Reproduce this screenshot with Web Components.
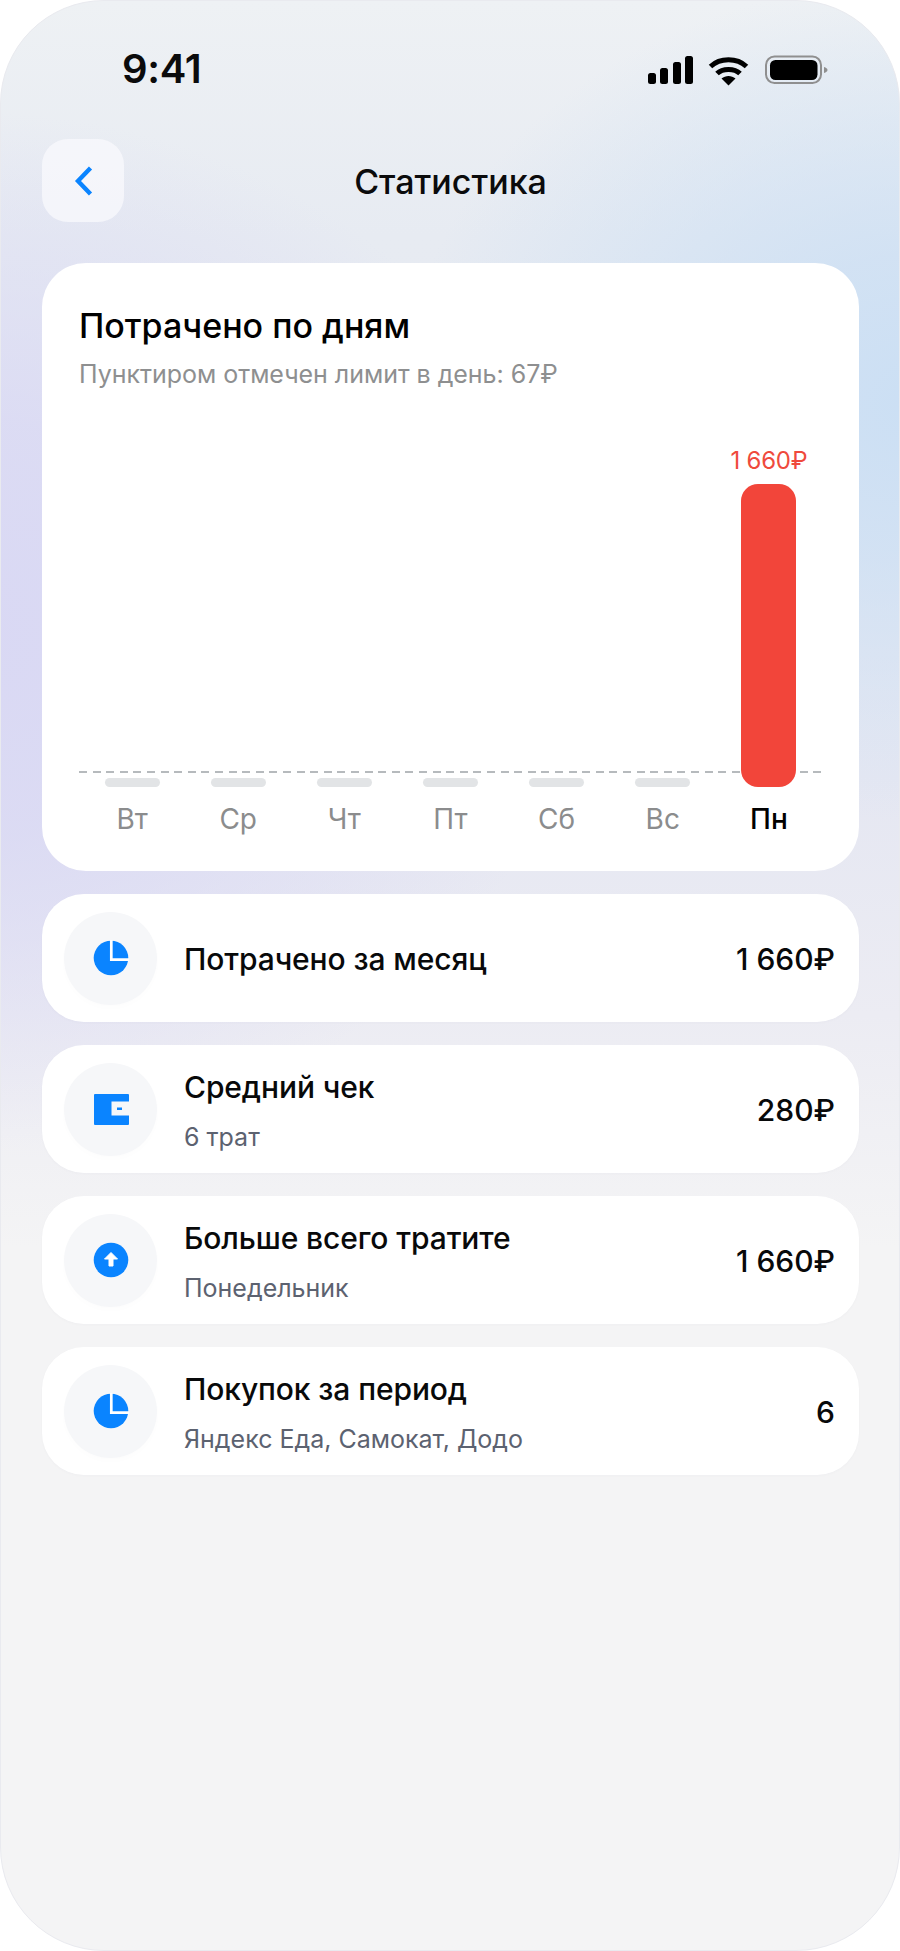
<!DOCTYPE html>
<html lang="ru">
<head>
<meta charset="utf-8">
<title>Статистика</title>
<style>
    html, body{
        margin: 0;
        background: #fff;
    }
    body{
        font-family: "Inter", "Noto Sans", sans-serif;
    }
</style>
</head>
<body>
<phone-frame>
    <status-bar></status-bar>
    <nav-header>Статистика</nav-header>
    <chart-card heading="Потрачено по дням" note="Пунктиром отмечен лимит в день: 67₽">
        <chart-column day="Вт"></chart-column>
        <chart-column day="Ср"></chart-column>
        <chart-column day="Чт"></chart-column>
        <chart-column day="Пт"></chart-column>
        <chart-column day="Сб"></chart-column>
        <chart-column day="Вс"></chart-column>
        <chart-column day="Пн" value="1 660₽" active></chart-column>
    </chart-card>
    <stat-row heading="Потрачено за месяц" value="1 660₽"><stat-icon kind="pie"></stat-icon></stat-row>
    <stat-row heading="Средний чек" note="6 трат" value="280₽"><stat-icon kind="wallet"></stat-icon></stat-row>
    <stat-row heading="Больше всего тратите" note="Понедельник" value="1 660₽"><stat-icon kind="up"></stat-icon></stat-row>
    <stat-row heading="Покупок за период" note="Яндекс Еда, Самокат, Додо" value="6"><stat-icon kind="pie"></stat-icon></stat-row>
</phone-frame>

<script>
const phoneTemplate = document.createElement('template');
phoneTemplate.innerHTML = `
    <style>
        :host{
            width: 900px;
            height: 1951px;
            padding: 0 40px 0 41px;

            display: flex;
            flex-direction: column;

            box-sizing: border-box;
            overflow: hidden;
            border: 1px solid #e9eaef;
            border-radius: 104px;
            background-color: #f4f4f5;
            background-image:
                radial-gradient(520px 420px at 920px 400px, #cbdff4 0%, rgba(203,223,244,.75) 35%, rgba(203,223,244,0) 100%),
                radial-gradient(620px 520px at -40px 630px, #d9d8f4 0%, rgba(217,216,244,.8) 40%, rgba(217,216,244,0) 100%),
                linear-gradient(180deg, #eef1f4 0%, #e7ebf2 12%, #e5e7f2 40%, #ececf3 52%, #f4f4f5 64%);
        }
        ::slotted(stat-row){
            margin-top: 23px;
        }
    </style>
    <slot></slot>
`;

class PhoneFrame extends HTMLElement{
    constructor(){
        super();
        this.attachShadow({mode: 'open'})
            .appendChild(phoneTemplate.content.cloneNode(true));
    }
}

const statusTemplate = document.createElement('template');
statusTemplate.innerHTML = `
    <style>
        :host{
            height: 138px;
            padding: 45px 30px 0 80px;

            display: flex;
            justify-content: space-between;
            align-items: flex-start;

            box-sizing: border-box;
        }
        .time{
            font-family: "Inter", sans-serif;
            font-size: 40px;
            line-height: 46px;
            font-weight: 600;
            letter-spacing: -.3px;
            color: #0b0b0c;
        }
        svg{
            margin-top: 9px;
            display: block;
        }
    </style>
    <span class="time">9:41</span>
    <svg width="182" height="32" viewBox="0 0 182 32">
        <rect x="1" y="18" width="8" height="11" rx="2.5"/>
        <rect x="13" y="13" width="8" height="16" rx="2.5"/>
        <rect x="26" y="7" width="8" height="22" rx="2.5"/>
        <rect x="38" y="1" width="8" height="28" rx="2.5"/>
        <g fill="none" stroke="#000" stroke-width="5">
            <path d="M63.5 11.5C73 2.500 90 2.500 99.500 11.500"/>
            <path d="M70 18.500C75.500 13 87.500 13 93 18.500"/>
        </g>
        <path d="M74.500 23.500C78.500 20 84.500 20 88.500 23.500L81.500 30.500Z"/>
        <rect x="119" y="1.500" width="55" height="26.500" rx="8.500" fill="none" stroke="#8f8f8f" stroke-width="2"/>
        <rect x="123" y="5" width="47.500" height="20" rx="5.500"/>
        <path d="M177 12C179 12.600 180.500 13.500 180.500 15S179 17.400 177 18Z" fill="#8f8f8f"/>
    </svg>
`;

class StatusBar extends HTMLElement{
    constructor(){
        super();
        this.attachShadow({mode: 'open'})
            .appendChild(statusTemplate.content.cloneNode(true));
    }
}

const headerTemplate = document.createElement('template');
headerTemplate.innerHTML = `
    <style>
        :host{
            height: 83px;
            margin-bottom: 41px;

            display: grid;
            grid-template-columns: 82px 1fr 82px;
            align-items: center;
        }
        .back{
            width: 82px;
            height: 83px;

            display: flex;
            justify-content: center;
            align-items: center;

            border-radius: 26px;
            background-color: rgba(248,249,252,.78);
        }
        .back svg{
            margin-left: 2px;
        }
        .title{
            margin-top: 2px;

            font-size: 34px;
            font-weight: 500;
            text-align: center;
            color: #0b0b0c;
        }
    </style>
    <div class="back">
        <svg width="22" height="32" viewBox="0 0 22 32">
            <path d="M17.500 3L5 16L17.500 29" fill="none" stroke="#0a84ff" stroke-width="4.400" stroke-linejoin="miter"/>
        </svg>
    </div>
    <div class="title"><slot></slot></div>
`;

class NavHeader extends HTMLElement{
    constructor(){
        super();
        this.attachShadow({mode: 'open'})
            .appendChild(headerTemplate.content.cloneNode(true));
    }
}

const chartTemplate = document.createElement('template');
chartTemplate.innerHTML = `
    <style>
        :host{
            height: 608px;
            padding: 43px 37px 0;

            display: flex;
            flex-direction: column;

            box-sizing: border-box;
            border-radius: 44px;
            background-color: #fff;
        }
        .heading{
            font-size: 34px;
            line-height: 40px;
            font-weight: 500;
            color: #000;
        }
        .note{
            margin-top: 12px;

            font-size: 25px;
            line-height: 32px;
            font-weight: 400;
            letter-spacing: -.03px;
            color: #8e8f90;
        }
        .plot{
            height: 455px;
            margin-top: 6px;

            position: relative;
            display: grid;
            grid-template-columns: repeat(7, 1fr);
        }
        .limit{
            height: 2px;

            position: absolute;
            left: 0;
            right: 0;
            bottom: 78px;

            background-image: repeating-linear-gradient(90deg, #b6babd 0 8px, transparent 8px 13.600px);
        }
    </style>
    <div class="heading"></div>
    <div class="note"></div>
    <div class="plot">
        <div class="limit"></div>
        <slot></slot>
    </div>
`;

class ChartCard extends HTMLElement{
    constructor(){
        super();
        this.attachShadow({mode: 'open'})
            .appendChild(chartTemplate.content.cloneNode(true));

        this.shadowRoot.querySelector('.heading').textContent = this.getAttribute('heading');
        this.shadowRoot.querySelector('.note').textContent = this.getAttribute('note');
    }
}

const columnTemplate = document.createElement('template');
columnTemplate.innerHTML = `
    <style>
        :host{
            display: flex;
            flex-direction: column;
            justify-content: flex-end;
            align-items: center;
        }
        .value{
            margin-bottom: 8px;

            font-size: 24px;
            line-height: 30px;
            font-weight: 400;
            letter-spacing: -.2px;
            white-space: nowrap;
            color: #ef4a3c;
        }
        .bar{
            width: 55px;
            height: 9px;

            border-radius: 5px;
            background-color: #e2e4e6;
        }
        .day{
            height: 64px;

            font-size: 28px;
            line-height: 64px;
            font-weight: 400;
            color: #8b8c8d;
        }
        :host([active]) .bar{
            height: 303px;

            position: relative;
            z-index: 1;

            border-radius: 17px;
            background-color: #f2453a;
        }
        :host([active]) .day{
            font-weight: 500;
            color: #000;
        }
    </style>
    <div class="value"></div>
    <div class="bar"></div>
    <div class="day"></div>
`;

class ChartColumn extends HTMLElement{
    constructor(){
        super();
        this.attachShadow({mode: 'open'})
            .appendChild(columnTemplate.content.cloneNode(true));

        this.shadowRoot.querySelector('.day').textContent = this.getAttribute('day');

        const value = this.shadowRoot.querySelector('.value');
        if (this.hasAttribute('value')) value.textContent = this.getAttribute('value');
        else value.remove();
    }
}

const rowTemplate = document.createElement('template');
rowTemplate.innerHTML = `
    <style>
        :host{
            height: 128px;
            padding: 0 24px 0 22px;

            display: flex;
            align-items: center;

            box-sizing: border-box;
            border-radius: 42px;
            background-color: #fff;
            box-shadow: 0 1px 3px rgba(40,50,80,.025);
        }
        :host(:not([note])) .text{
            margin-top: 1px;
        }
        .text{
            margin: 3px 0 0 27px;

            display: flex;
            flex: 1;
            flex-direction: column;
            gap: 16px;
        }
        .heading{
            font-size: 30px;
            line-height: 36px;
            font-weight: 500;
            letter-spacing: -.1px;
            color: #08090a;
        }
        .note{
            font-size: 25px;
            line-height: 32px;
            font-weight: 400;
            color: #5c6270;
        }
        .value{
            margin-top: 2px;

            font-size: 30px;
            line-height: 36px;
            font-weight: 500;
            color: #08090a;
        }
    </style>
    <slot></slot>
    <div class="text">
        <div class="heading"></div>
        <div class="note"></div>
    </div>
    <div class="value"></div>
`;

class StatRow extends HTMLElement{
    constructor(){
        super();
        this.attachShadow({mode: 'open'})
            .appendChild(rowTemplate.content.cloneNode(true));

        this.shadowRoot.querySelector('.heading').textContent = this.getAttribute('heading');
        this.shadowRoot.querySelector('.value').textContent = this.getAttribute('value');

        const note = this.shadowRoot.querySelector('.note');
        if (this.hasAttribute('note')) note.textContent = this.getAttribute('note');
        else note.remove();
    }
}

const statIcons = {
    pie: `
        <svg width="36" height="36" viewBox="0 0 36 36">
            <circle cx="18" cy="18" r="17.300" fill="#0a84ff"/>
            <path d="M18.300 -1V19.600H37" fill="none" stroke="#fff" stroke-width="2.700"/>
        </svg>
    `,
    wallet: `
        <svg width="36" height="36" viewBox="0 0 36 36">
            <path d="M2 3H35Q36 3 36 4V10.500H18.500V24.500H36V33Q36 34 35 34H2Q1 34 1 33V4Q1 3 2 3Z" fill="#0a84ff"/>
            <rect x="24" y="16.500" width="5" height="2.500" fill="#0a84ff"/>
        </svg>
    `,
    up: `
        <svg width="36" height="36" viewBox="0 0 36 36">
            <circle cx="18" cy="18" r="17.300" fill="#0a84ff"/>
            <path d="M18 10.500L24.500 17H20V24H16V17H11.500Z" fill="#fff" stroke="#fff" stroke-width="1" stroke-linejoin="round"/>
        </svg>
    `,
};

class StatIcon extends HTMLElement{
    constructor(){
        super();
        this.attachShadow({mode: 'open'}).innerHTML = `
            <style>
                :host{
                    width: 93px;
                    height: 93px;

                    display: flex;
                    flex: none;
                    justify-content: center;
                    align-items: center;

                    border-radius: 50%;
                    background-color: #f6f7f9;
                    box-shadow: 0 3px 6px rgba(40,50,80,.012);
                }
                svg{
                    display: block;
                }
            </style>
            ${statIcons[this.getAttribute('kind')]}
        `;
    }
}

customElements.define('phone-frame', PhoneFrame);
customElements.define('status-bar', StatusBar);
customElements.define('nav-header', NavHeader);
customElements.define('chart-card', ChartCard);
customElements.define('chart-column', ChartColumn);
customElements.define('stat-row', StatRow);
customElements.define('stat-icon', StatIcon);
</script>
</body>
</html>
